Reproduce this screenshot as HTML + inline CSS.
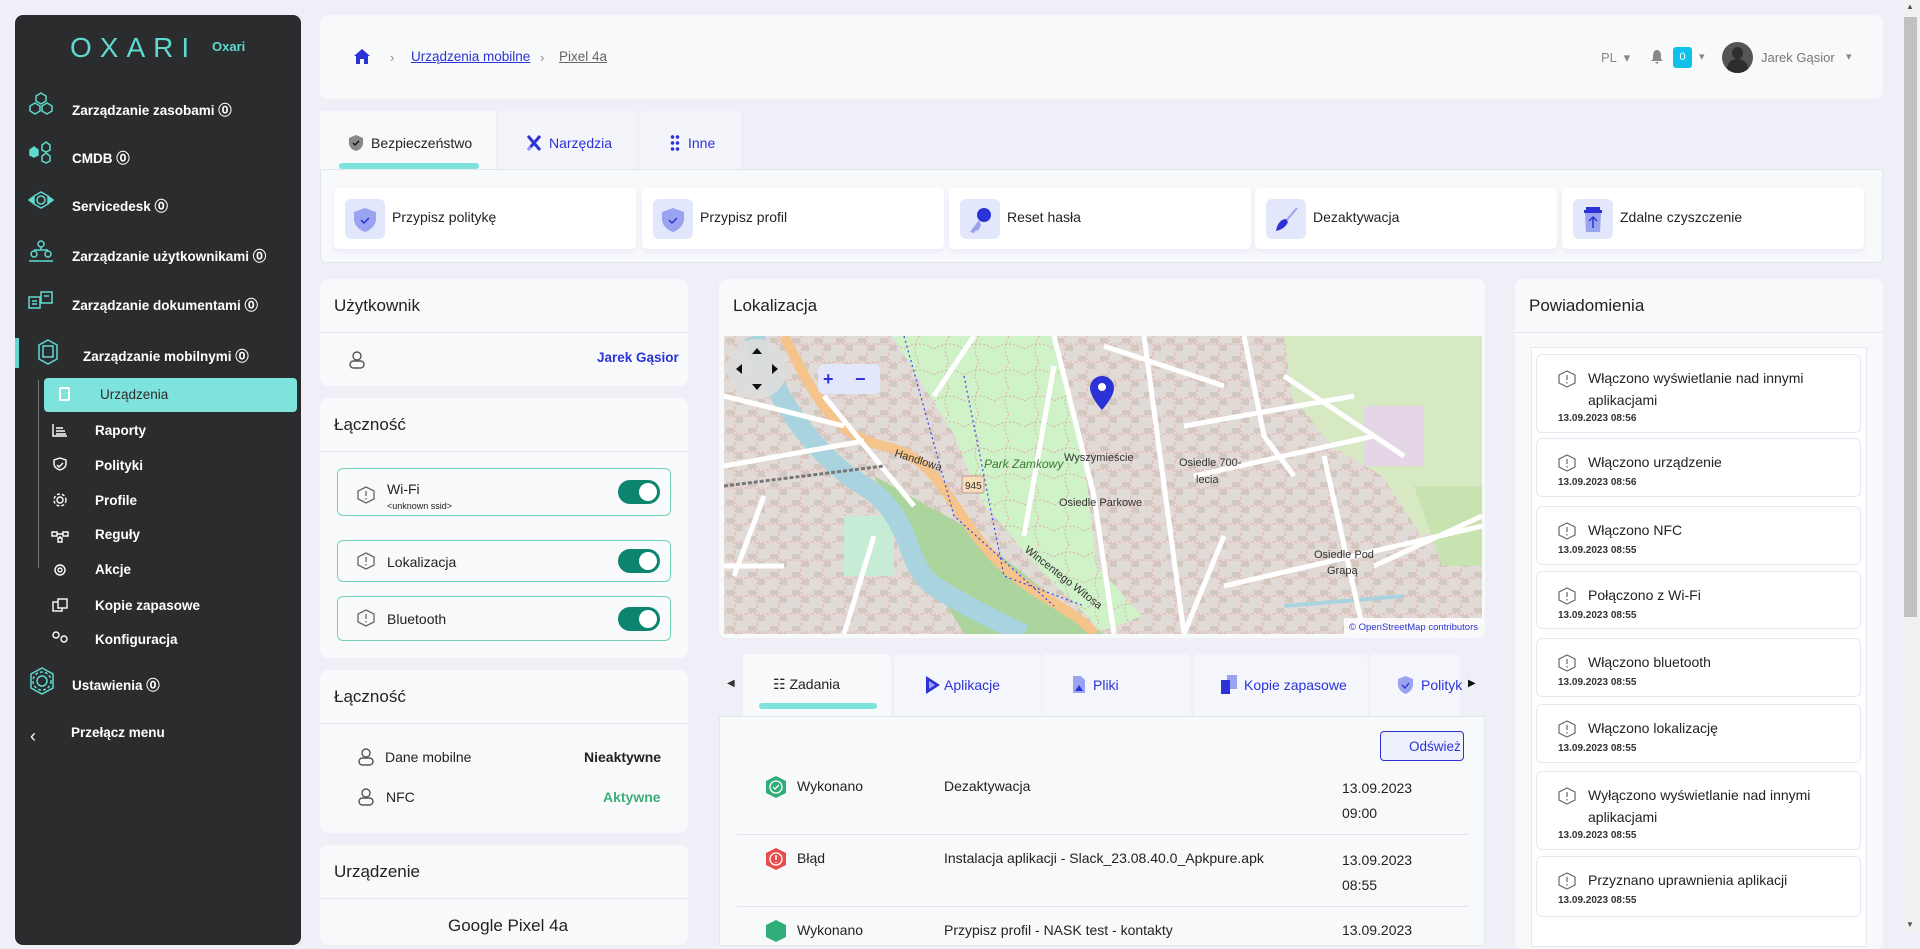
<!DOCTYPE html>
<html><head><meta charset="utf-8"><style>
*{box-sizing:border-box;margin:0;padding:0}
body{width:1920px;height:931px;overflow:hidden;background:#eeeff7;font-family:"Liberation Sans",sans-serif;color:#222;position:relative}
.a{position:absolute}
.side{left:15px;top:15px;width:286px;height:930px;background:#2b2c2e;border-radius:8px}
.si{position:absolute;color:#fff;font-weight:bold;font-size:13.5px;white-space:nowrap}
.card{position:absolute;background:#f8f9fb;border-radius:8px}
.ttl{position:absolute;font-size:17px;color:#222}
.hr{position:absolute;left:0;right:0;height:1px;background:#e6e7ee}
.btn{position:absolute;top:188px;width:302px;height:61px;background:#fff;border-radius:5px;box-shadow:0 3px 6px rgba(120,130,240,.12)}
.btn .ib{position:absolute;left:11px;top:11px;width:40px;height:40px;background:#e3e7fc;border-radius:6px}
.btn span{position:absolute;left:58px;top:21px;font-size:14px;color:#222}
.tg{position:absolute;right:10px;top:50%;margin-top:-12px;width:42px;height:24px;border-radius:12px;background:#0b8470}
.tg:after{content:"";position:absolute;right:3px;top:3px;width:18px;height:18px;border-radius:50%;background:#fff}
.cb{position:absolute;left:337px;width:334px;border:1px solid #6fd3b5;border-radius:6px;background:#f8f9fb}
.nt{position:absolute;left:1536px;width:325px;background:#fff;border:1px solid #e6e8f2;border-radius:6px}
.nt .t{position:absolute;left:51px;top:12px;font-size:14px;line-height:22px;width:260px}
.nt .d{position:absolute;left:21px;font-size:10px;font-weight:bold;color:#333}
.nt svg{position:absolute;left:21px;top:15px}
.bt{position:absolute;top:654px;height:62px;background:#f5f6fb;border-radius:5px 5px 0 0;font-size:14px;color:#2b33d6}
</style></head><body>

<!-- sidebar -->
<div class="a side"></div>
<div class="a" style="left:70px;top:32px;color:#5fd9cf;font-size:28px;letter-spacing:8px;font-weight:300">OXARI</div>
<div class="a" style="left:212px;top:39px;color:#5fd9cf;font-size:13px;font-weight:bold">Oxari</div>
<svg class="a" style="left:26px;top:92px" width="30" height="260" fill="none" stroke="#5fd9cf" stroke-width="1.5">
<polygon points="15,1 20,4 20,9 15,12 10,9 10,4"/><polygon points="9,11 14,14 14,19 9,22 4,19 4,14"/><polygon points="21,11 26,14 26,19 21,22 16,19 16,14"/>
<g transform="translate(0,49)"><polygon points="8,6 12,9 12,14 8,16 4,14 4,9" fill="#5fd9cf"/><polygon points="20,1 24,4 24,9 20,11 16,9 16,4"/><polygon points="20,12 24,15 24,20 20,22 16,20 16,15"/></g>
<g transform="translate(0,98)"><polygon points="15,2 22,6 22,14 15,18 8,14 8,6"/><circle cx="15" cy="10" r="4"/><path d="M3 10l4-3v6z" fill="#5fd9cf"/><path d="M27 10l-4-3v6z" fill="#5fd9cf"/></g>
<g transform="translate(0,148)"><circle cx="15" cy="4" r="3"/><circle cx="8" cy="14" r="3"/><circle cx="22" cy="14" r="3"/><path d="M15 7v3M8 10h14M3 21h24"/></g>
<g transform="translate(0,197)"><rect x="3" y="8" width="11" height="11"/><rect x="15" y="3" width="11" height="11"/><path d="M6 12h5M6 15h5M18 7h5"/></g>
</svg>
<svg class="a" style="left:38px;top:339px" width="20" height="26" fill="none" stroke="#5fd9cf" stroke-width="1.5"><polygon points="10,1 19,6 19,20 10,25 1,20 1,6"/><rect x="5" y="7" width="10" height="11"/></svg>
<div class="si" style="left:72px;top:99px">Zarządzanie zasobami ⓪</div>
<div class="si" style="left:72px;top:147px">CMDB ⓪</div>
<div class="si" style="left:72px;top:195px">Servicedesk ⓪</div>
<div class="si" style="left:72px;top:245px">Zarządzanie użytkownikami ⓪</div>
<div class="si" style="left:72px;top:294px">Zarządzanie dokumentami ⓪</div>
<div class="a" style="left:15px;top:338px;width:4px;height:30px;background:#5fd9cf"></div>
<div class="si" style="left:83px;top:345px">Zarządzanie mobilnymi ⓪</div>
<div class="a" style="left:38px;top:380px;width:1px;height:188px;background:#777"></div>
<div class="a" style="left:44px;top:378px;width:253px;height:34px;background:#7fe3dd;border-radius:4px"></div>
<div class="a" style="left:59px;top:387px;width:11px;height:14px;border:2px solid #fff;border-radius:2px"></div>
<div class="si" style="left:100px;top:387px;color:#2b2c2e;font-weight:normal">Urządzenia</div>
<div class="si" style="left:95px;top:423px">Raporty</div>
<div class="si" style="left:95px;top:458px">Polityki</div>
<div class="si" style="left:95px;top:493px">Profile</div>
<div class="si" style="left:95px;top:527px">Reguły</div>
<div class="si" style="left:95px;top:562px">Akcje</div>
<div class="si" style="left:95px;top:598px">Kopie zapasowe</div>
<div class="si" style="left:95px;top:632px">Konfiguracja</div>
<svg class="a" style="left:50px;top:420px" width="20" height="230" fill="none" stroke="#fff" stroke-width="1.4">
<path d="M3 4v12h14M6 8h7M6 11h9M6 14h10"/>
<path d="M10 38l6 2v4c0 3-3 5-6 6-3-1-6-3-6-6v-4z M7 45l2 2 4-4"/>
<circle cx="10" cy="80" r="3"/><circle cx="10" cy="80" r="6" stroke-dasharray="3 2"/>
<path d="M2 112h5v4h-5zM13 112h5v4h-5zM8 118h4v4h-4zM7 114h6M10 116v2"/>
<circle cx="10" cy="150" r="2"/><circle cx="10" cy="150" r="5"/>
<rect x="3" y="182" width="9" height="9"/><rect x="8" y="179" width="9" height="9" fill="#2b2c2e"/>
<circle cx="6" cy="215" r="3"/><circle cx="14" cy="219" r="3"/>
</svg>
<svg class="a" style="left:28px;top:667px" width="28" height="28" fill="none" stroke="#5fd9cf" stroke-width="1.5"><polygon points="14,1 25,7 25,21 14,27 3,21 3,7"/><circle cx="14" cy="14" r="5"/><circle cx="14" cy="14" r="9" stroke-dasharray="3 2"/></svg>
<div class="si" style="left:72px;top:674px">Ustawienia ⓪</div>
<div class="si" style="left:30px;top:726px;font-size:18px;font-weight:normal">‹</div>
<div class="si" style="left:71px;top:725px">Przełącz menu</div>

<!-- header -->
<div class="card" style="left:320px;top:15px;width:1563px;height:84px"></div>
<svg class="a" style="left:354px;top:49px" width="16" height="15"><path d="M8 0L0 7h2v8h4v-5h4v5h4V7h2z" fill="#2b33d6"/></svg>
<div class="a" style="left:390px;top:50px;color:#888;font-size:13px">›</div>
<div class="a" style="left:411px;top:49px;color:#2b33d6;font-size:13.5px;text-decoration:underline">Urządzenia mobilne</div>
<div class="a" style="left:540px;top:50px;color:#888;font-size:13px">›</div>
<div class="a" style="left:559px;top:49px;color:#666;font-size:13.5px;text-decoration:underline">Pixel 4a</div>
<div class="a" style="left:1601px;top:50px;color:#888;font-size:13px">PL &nbsp;▾</div>
<svg class="a" style="left:1651px;top:50px" width="12" height="14"><path d="M6 0c3 0 4 3 4 6v3l2 2H0l2-2V6c0-3 1-6 4-6zM4 12h4l-2 2z" fill="#888"/></svg>
<div class="a" style="left:1673px;top:47px;width:19px;height:21px;background:#0fc0e8;border-radius:3px;color:#fff;font-size:11px;text-align:center;line-height:21px">0</div>
<div class="a" style="left:1699px;top:50px;color:#888;font-size:11px">▾</div>
<div class="a" style="left:1722px;top:42px;width:31px;height:31px;border-radius:50%;background:#555;overflow:hidden"><div class="a" style="left:10px;top:5px;width:11px;height:12px;border-radius:50%;background:#2d2d2d"></div><div class="a" style="left:5px;top:17px;width:21px;height:16px;border-radius:10px 10px 0 0;background:#2d2d2d"></div></div>
<div class="a" style="left:1761px;top:50px;color:#777;font-size:13px">Jarek Gąsior</div>
<div class="a" style="left:1846px;top:50px;color:#888;font-size:11px">▾</div>

<!-- tabs -->
<div class="a" style="left:320px;top:111px;width:176px;height:60px;background:#f8f9fb;border-radius:4px 4px 0 0"></div>
<div class="a" style="left:498px;top:111px;width:139px;height:58px;background:#f4f5fa;border-radius:4px 4px 0 0"></div>
<div class="a" style="left:639px;top:111px;width:102px;height:58px;background:#f4f5fa;border-radius:4px 4px 0 0"></div>
<svg class="a" style="left:349px;top:135px" width="14" height="16"><path d="M7 0l7 3v5c0 4-3 7-7 8-4-1-7-4-7-8V3z" fill="#888"/><path d="M4 8l2 2 4-4" stroke="#111" fill="none" stroke-width="1.3"/></svg>
<div class="a" style="left:371px;top:135px;font-size:14px">Bezpieczeństwo</div>
<div class="a" style="left:339px;top:163px;width:140px;height:6px;border-radius:3px;background:#7fe3dd"></div>
<svg class="a" style="left:526px;top:134px" width="16" height="18"><path d="M2 2l12 14M14 2L2 16" stroke="#2b33d6" stroke-width="3"/><path d="M2 16l3-3" stroke="#9aa3f0" stroke-width="3"/></svg>
<div class="a" style="left:549px;top:135px;font-size:14px;color:#2b33d6">Narzędzia</div>
<div class="a" style="left:670px;top:134px;width:10px;height:18px;background:radial-gradient(circle,#2b33d6 1.6px,transparent 2px) 0 0/5px 6px"></div>
<div class="a" style="left:688px;top:135px;font-size:14px;color:#2b33d6">Inne</div>

<div class="card" style="left:320px;top:169px;width:1563px;height:94px;border-radius:0 0 6px 6px;border:1px solid #e2e4ee"></div>
<div class="btn" style="left:334px"><div class="ib"><svg style="margin:9px 0 0 9px" width="22" height="24"><path d="M11 0l11 4v7c0 6-5 11-11 13C5 22 0 17 0 11V4z" fill="#9aa3ef"/><path d="M7 12l3 3 5-5" stroke="#2b33d6" fill="none" stroke-width="1.5"/></svg></div><span>Przypisz politykę</span></div>
<div class="btn" style="left:642px"><div class="ib"><svg style="margin:9px 0 0 9px" width="22" height="24"><path d="M11 0l11 4v7c0 6-5 11-11 13C5 22 0 17 0 11V4z" fill="#9aa3ef"/><path d="M7 12l3 3 5-5" stroke="#2b33d6" fill="none" stroke-width="1.5"/></svg></div><span>Przypisz profil</span></div>
<div class="btn" style="left:949px"><div class="ib"><svg style="margin:7px 0 0 8px" width="26" height="28"><circle cx="16" cy="9" r="7" fill="#2b33d6"/><path d="M11 14L2 26l4 1 2-3 2 1 3-6" fill="#9aa3ef"/></svg></div><span>Reset hasła</span></div>
<div class="btn" style="left:1255px"><div class="ib"><svg style="margin:7px 0 0 7px" width="26" height="28"><path d="M24 2L13 15" stroke="#9aa3ef" stroke-width="2"/><path d="M13 13c-5 0-9 5-10 12 5-1 10-4 12-9z" fill="#2b33d6"/></svg></div><span>Dezaktywacja</span></div>
<div class="btn" style="left:1562px"><div class="ib"><svg style="margin:8px 0 0 10px" width="20" height="26"><rect x="3" y="0" width="14" height="3" fill="#2b33d6"/><rect x="1" y="3" width="18" height="3" fill="#2b33d6"/><path d="M2 6h16l-1 19H3z" fill="#9aa3ef"/><path d="M10 21V10M6 14l4-4 4 4" stroke="#2b33d6" fill="none" stroke-width="1.5"/></svg></div><span>Zdalne czyszczenie</span></div>

<!-- left column -->
<div class="card" style="left:320px;top:279px;width:368px;height:107px"><div class="ttl" style="left:14px;top:17px">Użytkownik</div><div class="hr" style="top:53px"></div></div>
<svg class="a" style="left:349px;top:351px" width="16" height="18" fill="none" stroke="#555" stroke-width="1.4"><circle cx="8" cy="5" r="4" /><rect x="1" y="10" width="14" height="7" rx="3.5"/></svg>
<div class="a" style="left:597px;top:350px;color:#2b33d6;font-weight:bold;font-size:13.5px">Jarek Gąsior</div>

<div class="card" style="left:320px;top:398px;width:368px;height:260px"><div class="ttl" style="left:14px;top:17px">Łączność</div><div class="hr" style="top:53px"></div></div>
<div class="cb" style="top:468px;height:48px"><div class="a" style="left:49px;top:12px;font-size:14px">Wi-Fi</div><div class="a" style="left:49px;top:32px;font-size:9px">&lt;unknown ssid&gt;</div><div class="tg"></div></div>
<div class="cb" style="top:540px;height:42px"><div class="a" style="left:49px;top:13px;font-size:14px">Lokalizacja</div><div class="tg"></div></div>
<div class="cb" style="top:596px;height:45px"><div class="a" style="left:49px;top:14px;font-size:14px">Bluetooth</div><div class="tg"></div></div>
<svg class="a" style="left:357px;top:486px" width="18" height="150" fill="none" stroke="#666" stroke-width="1.3">
<polygon points="9,1 17,5 17,13 9,17 1,13 1,5"/><path d="M9 5v5M9 12v1.5"/>
<g transform="translate(0,66)"><polygon points="9,1 17,5 17,13 9,17 1,13 1,5"/><path d="M9 5v5M9 12v1.5"/></g>
<g transform="translate(0,123)"><polygon points="9,1 17,5 17,13 9,17 1,13 1,5"/><path d="M9 5v5M9 12v1.5"/></g>
</svg>

<div class="card" style="left:320px;top:670px;width:368px;height:163px"><div class="ttl" style="left:14px;top:17px">Łączność</div><div class="hr" style="top:53px"></div></div>
<svg class="a" style="left:358px;top:748px" width="16" height="70" fill="none" stroke="#555" stroke-width="1.4"><circle cx="8" cy="5" r="4"/><rect x="1" y="10" width="14" height="7" rx="3.5"/><g transform="translate(0,40)"><circle cx="8" cy="5" r="4"/><rect x="1" y="10" width="14" height="7" rx="3.5"/></g></svg>
<div class="a" style="left:385px;top:749px;font-size:14px">Dane mobilne</div>
<div class="a" style="left:584px;top:749px;font-size:14px;font-weight:bold">Nieaktywne</div>
<div class="a" style="left:386px;top:789px;font-size:14px">NFC</div>
<div class="a" style="left:603px;top:789px;font-size:14px;font-weight:bold;color:#3fae7a">Aktywne</div>

<div class="card" style="left:320px;top:845px;width:368px;height:100px"><div class="ttl" style="left:14px;top:17px">Urządzenie</div><div class="hr" style="top:53px"></div><div class="a" style="left:128px;top:71px;font-size:17px">Google Pixel 4a</div></div>

<!-- map card -->
<div class="card" style="left:719px;top:279px;width:766px;height:359px"><div class="ttl" style="left:14px;top:17px">Lokalizacja</div></div>
<svg class="a" style="left:724px;top:336px" width="758" height="298" viewBox="0 0 758 298">
<defs>
<pattern id="b" width="22" height="18" patternUnits="userSpaceOnUse"><rect width="22" height="18" fill="#e0dbd6"/><rect x="2" y="2" width="8" height="5" fill="#d3c8c0"/><rect x="12" y="9" width="7" height="6" fill="#d3c8c0"/><path d="M0 8h22M11 0v18" stroke="#f2a3a3" stroke-width=".8" stroke-dasharray="2 2"/></pattern>
<pattern id="p" width="30" height="26" patternUnits="userSpaceOnUse"><rect width="30" height="26" fill="#cff2c8"/><path d="M0 13q15-10 30 0M15 0q-8 13 0 26" stroke="#e89b9b" stroke-width=".8" stroke-dasharray="2 2" fill="none"/></pattern>
</defs>
<rect width="758" height="298" fill="url(#b)"/>
<path d="M560 0h198v170l-60 30-40-60-50-30-40-50z" fill="#d6e9c2"/>
<path d="M640 70h60v60h-60z" fill="#e4d6e6"/>
<path d="M690 150h68v80h-40z" fill="#c8e2b0"/>
<path d="M168 0h160l30 110 15 120 45 50-40 15-70-70-50-60-30-70z" fill="url(#p)"/>
<path d="M150 140l90 50 100 80 40 28H240l-30-50-30-40z" fill="#abd59c"/>
<path d="M120 180h50v60h-50z" fill="#c7ecd6"/>
<path d="M30 0C50 60 90 120 140 150s40 80 70 100 90 48 90 48" stroke="#a9d3df" stroke-width="20" fill="none"/>
<path d="M560 270l120-10" stroke="#a9d3df" stroke-width="4" fill="none"/>
<path d="M60 0c30 60 50 100 100 110s60 50 100 100 90 60 110 88" stroke="#f4c48b" stroke-width="10" fill="none"/>
<path d="M0 130l140-25M0 230h60M100 60l90 110M330 0l40 160 20 138M420 0l40 298M500 250L758 190M300 200l30-170M380 10l120 40M470 140l180-40M600 120l40 178M0 60l120 30M520 0l20 100 30 40M560 40l120 80M250 0l-40 60M150 200l-30 98M40 160l-30 80M460 90l170-30M650 230l108-50M500 200l-40 98" stroke="#fff" stroke-width="5" fill="none"/>
<path d="M0 150l160-20" stroke="#777" stroke-width="3" stroke-dasharray="4 2" fill="none"/>
<path d="M180 0l50 180 100 90M240 40l40 200 80 30" stroke="#3344ee" stroke-dasharray="2 3" stroke-width="1.2" fill="none"/>
<text x="260" y="132" font-size="12" fill="#3a7a35" font-style="italic" font-family="Liberation Sans">Park Zamkowy</text>
<text x="340" y="125" font-size="11" fill="#333" font-family="Liberation Sans">Wyszymieście</text>
<text x="335" y="170" font-size="11" fill="#333" font-family="Liberation Sans">Osiedle Parkowe</text>
<text x="455" y="130" font-size="11" fill="#333" font-family="Liberation Sans">Osiedle 700-</text>
<text x="472" y="147" font-size="11" fill="#333" font-family="Liberation Sans">lecia</text>
<text x="590" y="222" font-size="11" fill="#333" font-family="Liberation Sans">Osiedle Pod</text>
<text x="603" y="238" font-size="11" fill="#333" font-family="Liberation Sans">Grapą</text>
<text x="170" y="120" font-size="11" fill="#333" font-family="Liberation Sans" transform="rotate(18 170 120)">Handlowa</text>
<text x="300" y="215" font-size="11" fill="#333" font-family="Liberation Sans" transform="rotate(38 300 215)">Wincentego Witosa</text>
<rect x="238" y="140" width="22" height="17" rx="2" fill="#f6dcb7" stroke="#b99"/><text x="241" y="153" font-size="10" fill="#333" font-family="Liberation Sans">945</text>
<circle cx="33" cy="33" r="30" fill="#ddd" opacity=".9"/><path d="M33 12l-5 6h10zM33 54l-5-6h10zM12 33l6-5v10zM54 33l-6-5v10z" fill="#111"/>
<rect x="94" y="28" width="62" height="30" rx="6" fill="#e3e7fc"/><text x="99" y="49" font-size="18" fill="#2b33d6" font-family="Liberation Sans" font-weight="bold">+</text><text x="131" y="49" font-size="18" fill="#2b33d6" font-family="Liberation Sans" font-weight="bold">−</text>
<path d="M380 100a12 12 0 0 1 12 12c0 9-12 22-12 22s-12-13-12-22a12 12 0 0 1 12-12z" fill="#2b33d6" transform="translate(-2,-60)"/><circle cx="378" cy="51" r="4" fill="#fff"/>
<rect x="620" y="282" width="138" height="16" fill="#fff" opacity=".85"/><text x="625" y="294" font-size="9.5" fill="#2b33d6" font-family="Liberation Sans">© OpenStreetMap contributors</text>
</svg>

<!-- bottom tabs -->
<div class="a" style="left:727px;top:678px;font-size:10px;color:#333">◀</div>
<div class="bt" style="left:743px;width:148px;background:#f8f9fb"><div class="a" style="left:30px;top:22px;color:#222">☷ Zadania</div><div class="a" style="left:16px;top:49px;width:118px;height:6px;border-radius:3px;background:#7fe3dd"></div></div>
<div class="bt" style="left:894px;width:147px"><svg class="a" style="left:32px;top:22px" width="14" height="18"><path d="M0 0l14 9L0 18z" fill="#2b33d6"/><path d="M3 5l6 4-6 4z" fill="#9aa3ef"/></svg><div class="a" style="left:50px;top:23px">Aplikacje</div></div>
<div class="bt" style="left:1042px;width:149px"><svg class="a" style="left:31px;top:22px" width="12" height="17"><path d="M0 0h8l4 4v13H0z" fill="#9aa3ef"/><path d="M2 15l4-6 4 6z" fill="#2b33d6"/></svg><div class="a" style="left:51px;top:23px">Pliki</div></div>
<div class="bt" style="left:1194px;width:174px"><svg class="a" style="left:27px;top:21px" width="16" height="20"><rect x="6" y="0" width="10" height="14" fill="#9aa3ef"/><rect x="0" y="5" width="9" height="14" fill="#2b33d6"/></svg><div class="a" style="left:50px;top:23px">Kopie zapasowe</div></div>
<div class="bt" style="left:1370px;width:90px"><svg class="a" style="left:28px;top:22px" width="15" height="18"><path d="M7.5 0l7.5 3v5c0 5-3 8-7.5 10C3 16 0 13 0 8V3z" fill="#9aa3ef"/><path d="M4 9l3 3 4-5" stroke="#2b33d6" fill="none" stroke-width="1.3"/></svg><div class="a" style="left:51px;top:23px">Polityk</div></div>
<div class="a" style="left:1468px;top:678px;font-size:10px;color:#111">▶</div>

<div class="card" style="left:719px;top:716px;width:766px;height:230px;border:1px solid #e2e4ee;border-radius:0"></div>
<div class="a" style="left:1380px;top:731px;width:84px;height:30px;border:1.5px solid #2b33d6;border-radius:4px;background:#eef0fc;color:#2b33d6;font-size:13.5px;padding:7px 0 0 28px">Odśwież</div>
<svg class="a" style="left:766px;top:776px" width="20" height="22"><polygon points="10,0 20,5 20,17 10,22 0,17 0,5" fill="#2fae7a"/><circle cx="10" cy="11" r="6" fill="none" stroke="#fff" stroke-width="1.3"/><path d="M7 11l2 2 4-4" stroke="#fff" fill="none" stroke-width="1.3"/></svg>
<div class="a" style="left:797px;top:778px;font-size:14px">Wykonano</div>
<div class="a" style="left:944px;top:778px;font-size:14px">Dezaktywacja</div>
<div class="a" style="left:1342px;top:776px;font-size:14px;line-height:25px">13.09.2023<br>09:00</div>
<div class="a" style="left:737px;top:834px;width:731px;height:1px;background:#e3e4ec"></div>
<svg class="a" style="left:766px;top:848px" width="20" height="22"><polygon points="10,0 20,5 20,17 10,22 0,17 0,5" fill="#e84c4c"/><circle cx="10" cy="11" r="6" fill="none" stroke="#fff" stroke-width="1.3"/><path d="M10 7v5M10 14v1" stroke="#fff" stroke-width="1.5"/></svg>
<div class="a" style="left:797px;top:850px;font-size:14px">Błąd</div>
<div class="a" style="left:944px;top:850px;font-size:14px">Instalacja aplikacji - Slack_23.08.40.0_Apkpure.apk</div>
<div class="a" style="left:1342px;top:848px;font-size:14px;line-height:25px">13.09.2023<br>08:55</div>
<div class="a" style="left:737px;top:906px;width:731px;height:1px;background:#e3e4ec"></div>
<svg class="a" style="left:766px;top:920px" width="20" height="22"><polygon points="10,0 20,5 20,17 10,22 0,17 0,5" fill="#2fae7a"/></svg>
<div class="a" style="left:797px;top:922px;font-size:14px">Wykonano</div>
<div class="a" style="left:944px;top:922px;font-size:14px">Przypisz profil - NASK test - kontakty</div>
<div class="a" style="left:1342px;top:922px;font-size:14px">13.09.2023</div>

<!-- notifications -->
<div class="card" style="left:1515px;top:279px;width:368px;height:670px"><div class="ttl" style="left:14px;top:17px">Powiadomienia</div><div class="hr" style="top:53px"></div></div>
<div class="a" style="left:1531px;top:347px;width:336px;height:600px;background:#fff;border:1px solid #e6e8f2"></div>
<div class="nt" style="top:354px;height:79px"><svg width="18" height="18" fill="none" stroke="#666" stroke-width="1.2"><polygon points="9,1 17,5 17,13 9,17 1,13 1,5"/><path d="M9 5v5M9 12v1.5"/></svg><div class="t">Włączono wyświetlanie nad innymi aplikacjami</div><div class="d" style="top:58px">13.09.2023 08:56</div></div>
<div class="nt" style="top:438px;height:59px"><svg width="18" height="18" fill="none" stroke="#666" stroke-width="1.2"><polygon points="9,1 17,5 17,13 9,17 1,13 1,5"/><path d="M9 5v5M9 12v1.5"/></svg><div class="t">Włączono urządzenie</div><div class="d" style="top:38px">13.09.2023 08:56</div></div>
<div class="nt" style="top:506px;height:59px"><svg width="18" height="18" fill="none" stroke="#666" stroke-width="1.2"><polygon points="9,1 17,5 17,13 9,17 1,13 1,5"/><path d="M9 5v5M9 12v1.5"/></svg><div class="t">Włączono NFC</div><div class="d" style="top:38px">13.09.2023 08:55</div></div>
<div class="nt" style="top:571px;height:58px"><svg width="18" height="18" fill="none" stroke="#666" stroke-width="1.2"><polygon points="9,1 17,5 17,13 9,17 1,13 1,5"/><path d="M9 5v5M9 12v1.5"/></svg><div class="t">Połączono z Wi-Fi</div><div class="d" style="top:38px">13.09.2023 08:55</div></div>
<div class="nt" style="top:638px;height:59px"><svg width="18" height="18" fill="none" stroke="#666" stroke-width="1.2"><polygon points="9,1 17,5 17,13 9,17 1,13 1,5"/><path d="M9 5v5M9 12v1.5"/></svg><div class="t">Włączono bluetooth</div><div class="d" style="top:38px">13.09.2023 08:55</div></div>
<div class="nt" style="top:704px;height:59px"><svg width="18" height="18" fill="none" stroke="#666" stroke-width="1.2"><polygon points="9,1 17,5 17,13 9,17 1,13 1,5"/><path d="M9 5v5M9 12v1.5"/></svg><div class="t">Włączono lokalizację</div><div class="d" style="top:38px">13.09.2023 08:55</div></div>
<div class="nt" style="top:771px;height:79px"><svg width="18" height="18" fill="none" stroke="#666" stroke-width="1.2"><polygon points="9,1 17,5 17,13 9,17 1,13 1,5"/><path d="M9 5v5M9 12v1.5"/></svg><div class="t">Wyłączono wyświetlanie nad innymi aplikacjami</div><div class="d" style="top:58px">13.09.2023 08:55</div></div>
<div class="nt" style="top:856px;height:61px"><svg width="18" height="18" fill="none" stroke="#666" stroke-width="1.2"><polygon points="9,1 17,5 17,13 9,17 1,13 1,5"/><path d="M9 5v5M9 12v1.5"/></svg><div class="t">Przyznano uprawnienia aplikacji</div><div class="d" style="top:38px">13.09.2023 08:55</div></div>

<!-- scrollbar -->
<div class="a" style="left:1901px;top:0;width:19px;height:931px;background:#f1f1f1"></div>
<div class="a" style="left:1904px;top:17px;width:13px;height:600px;background:#c1c1c1"></div>
<div class="a" style="left:1906px;top:2px;font-size:8px;color:#555">▲</div>
<div class="a" style="left:1906px;top:920px;font-size:8px;color:#555">▼</div>
</body></html>
